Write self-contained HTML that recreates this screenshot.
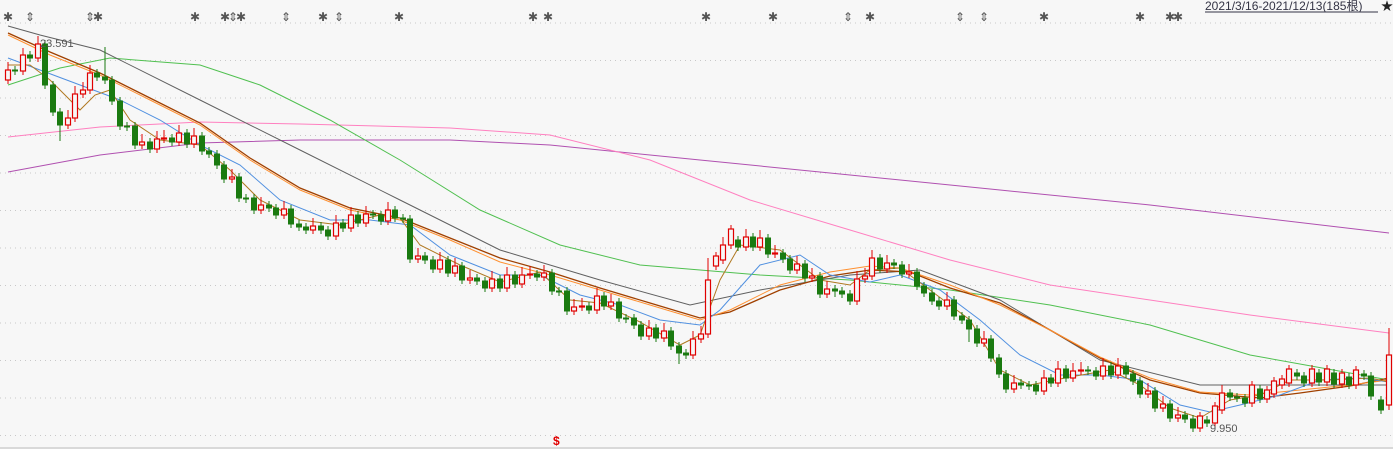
<!DOCTYPE html>
<html><head><meta charset="utf-8"><style>
html,body{margin:0;padding:0;background:#f7f7f7;width:1393px;height:449px;overflow:hidden;font-family:"Liberation Sans","Noto Sans CJK SC",sans-serif}
svg{position:absolute;left:0;top:0}
.R{fill:#f7f7f7;stroke:#e00000;stroke-width:1.2}
.G{fill:#1a7a10;stroke:#1a7a10}
.rw{stroke:#e00000;fill:none}
.gw{stroke:#1a7a10;fill:none}
.st{font-size:12px;fill:#555;text-anchor:middle}
</style></head><body>
<svg width="1393" height="449" xmlns="http://www.w3.org/2000/svg">
<g stroke="#c8c8c8" stroke-dasharray="1,4">
<line x1="0" x2="1393" y1="23" y2="23"/><line x1="0" x2="1393" y1="60.5" y2="60.5"/><line x1="0" x2="1393" y1="98" y2="98"/><line x1="0" x2="1393" y1="135.5" y2="135.5"/><line x1="0" x2="1393" y1="173" y2="173"/><line x1="0" x2="1393" y1="210.5" y2="210.5"/><line x1="0" x2="1393" y1="248" y2="248"/><line x1="0" x2="1393" y1="285.5" y2="285.5"/><line x1="0" x2="1393" y1="323" y2="323"/><line x1="0" x2="1393" y1="360.5" y2="360.5"/><line x1="0" x2="1393" y1="398" y2="398"/><line x1="0" x2="1393" y1="435.5" y2="435.5"/>
</g>
<line x1="0" x2="1393" y1="448" y2="448" stroke="#bbb"/>
<g fill="none">
<polyline stroke="#b050b0" points="8,172 100,155 200,143 300,140 450,140 550,145 700,160 850,175 1000,190 1150,205 1389,233"/>
<polyline stroke="#ff80c0" points="8,137 100,127 200,122 300,124 450,128 550,135 650,160 750,200 850,230 950,260 1050,285 1150,300 1250,315 1389,333"/>
<polyline stroke="#50c050" points="8,85 60,68 110,58 200,65 260,85 330,120 400,160 480,210 560,245 640,265 700,270 760,275 850,280 950,290 1050,305 1150,325 1250,355 1389,380"/>
<polyline stroke="#606060" points="8,26 40,35 100,50 200,100 300,150 400,200 500,250 600,280 690,305 760,290 850,275 920,270 1000,300 1100,360 1200,385 1300,385 1389,385"/>
<polyline stroke="#a04000" stroke-width="1.3" points="8,33 50,52 100,73 150,98 200,123 250,158 300,188 350,208 400,218 450,238 500,258 550,272 600,288 650,303 700,318 730,312 780,290 830,276 870,270 910,272 950,288 1000,303 1050,330 1100,358 1150,380 1200,393 1260,398 1300,393 1350,386 1389,378"/>
<polyline stroke="#ff9030" points="8,35 50,55 100,75 150,100 200,125 250,160 300,190 350,210 400,220 450,240 500,262 550,275 600,290 650,305 700,320 730,310 780,285 830,272 870,266 900,268 950,285 1000,305 1050,330 1100,357 1150,378 1200,392 1250,395 1300,390 1350,385 1389,380"/>
<polyline stroke="#5090e0" points="8,58 40,70 80,85 120,100 160,120 200,145 240,165 280,200 330,220 370,220 410,225 450,255 500,275 540,275 580,295 620,305 660,320 700,325 720,310 760,265 800,255 830,275 870,282 900,275 940,290 980,320 1020,355 1060,375 1100,375 1140,380 1180,405 1210,412 1240,405 1280,395 1320,380 1360,378 1389,382"/>
<polyline stroke="#b07820" points="8,65 30,65 50,80 70,100 80,110 95,95 110,90 130,120 160,140 200,145 230,170 260,200 300,220 340,225 380,215 400,218 420,245 460,265 500,282 540,272 570,300 600,303 640,322 680,345 700,335 720,280 740,245 780,250 820,280 850,285 870,270 900,268 930,290 970,320 1000,370 1030,385 1070,377 1110,370 1140,385 1170,408 1200,418 1230,400 1260,395 1290,380 1330,380 1370,378 1389,382"/>
</g>
<path class="rw" d="M8 62V84M23 48V75M38 36V62M68 110V129M75 86V122M83 82V98M90 65V94M142 134V149M157 131V153M164 130V143M179 125V146M194 128V148M232 169V183M261 197V214M284 201V219M313 218V234M336 215V240M351 207V232M366 206V227M388 202V225M418 248V263M440 252V273M455 258V277M470 270V284M492 271V292M507 267V292M522 267V288M530 266V279M544 265V281M574 299V315M582 298V311M597 288V314M611 294V310M649 320V340M664 323V342M693 331V359M701 326V343M708 258V338M716 252V270M723 237V264M731 225V249M746 229V251M760 230V251M775 245V258M797 256V274M812 268V282M827 281V298M857 271V305M865 268V283M872 250V280M887 255V273M909 264V278M947 292V310M984 331V347M1014 375V393M1044 370V395M1058 361V387M1073 363V382M1081 362V375M1103 358V380M1118 358V379M1148 383V398M1163 396V412M1178 407V422M1200 412V432M1215 402V427M1222 385V414M1252 381V407M1267 386V403M1274 377V398M1282 375V389M1289 365V387M1312 365V387M1327 365V386M1342 369V388M1356 366V389M1389 328V410"/>
<path class="gw" d="M15 66V75M30 51V62M45 40V89M53 81V116M60 108V141M97 69V81M105 47V84M112 76V105M120 97V130M127 122V131M135 122V149M150 138V153M172 134V146M187 129V148M202 132V155M209 147V158M217 150V169M224 161V183M239 173V202M246 194V203M254 194V214M269 201V212M276 204V219M291 205V228M299 220V231M306 223V234M321 222V234M328 226V240M343 219V232M358 211V227M373 210V219M381 211V225M395 206V222M403 214V223M410 215V263M425 252V264M433 256V273M448 256V277M462 262V284M477 274V285M485 277V292M500 275V292M515 271V288M537 270V281M552 269V295M559 287V296M567 287V315M589 302V314M604 292V310M619 298V322M626 314V323M634 314V329M641 321V340M656 324V342M671 327V350M679 342V364M686 349V359M738 236V251M753 233V251M768 234V258M783 249V263M790 255V274M805 260V282M820 272V298M835 285V297M842 287V298M850 290V305M880 254V273M894 259V269M902 261V278M917 268V290M924 282V297M932 289V305M939 297V310M954 296V320M962 312V324M969 316V342M977 325V347M991 335V362M999 354V378M1006 370V393M1021 379V389M1029 381V390M1036 381V395M1051 374V387M1066 365V382M1088 366V375M1096 367V380M1111 362V379M1126 362V378M1133 370V385M1140 377V398M1155 387V412M1170 400V422M1185 411V423M1193 415V432M1207 416V427M1230 389V401M1237 393V402M1245 394V407M1260 385V403M1297 369V380M1304 372V387M1319 369V386M1334 369V388M1349 373V389M1364 370V380M1371 372V400M1381 396V414"/>
<g>
<rect class="R" x="5.5" y="70" width="5" height="10"/><rect class="G" x="12.5" y="70" width="5" height="1"/><rect class="R" x="20.5" y="55" width="5" height="16"/><rect class="G" x="27.5" y="55" width="5" height="3"/><rect class="R" x="35.5" y="44" width="5" height="14"/><rect class="G" x="42.5" y="44" width="5" height="41"/><rect class="G" x="50.5" y="85" width="5" height="27"/><rect class="G" x="57.5" y="112" width="5" height="13"/><rect class="R" x="65.5" y="118" width="5" height="7"/><rect class="R" x="72.5" y="94" width="5" height="24"/><rect class="R" x="80.5" y="90" width="5" height="4"/><rect class="R" x="87.5" y="73" width="5" height="17"/><rect class="G" x="94.5" y="73" width="5" height="4"/><rect class="G" x="102.5" y="77" width="5" height="3"/><rect class="G" x="109.5" y="80" width="5" height="21"/><rect class="G" x="117.5" y="101" width="5" height="25"/><rect class="G" x="124.5" y="126" width="5" height="1"/><rect class="G" x="132.5" y="126" width="5" height="19"/><rect class="R" x="139.5" y="142" width="5" height="3"/><rect class="G" x="147.5" y="142" width="5" height="7"/><rect class="R" x="154.5" y="139" width="5" height="10"/><rect class="R" x="161.5" y="138" width="5" height="1"/><rect class="G" x="169.5" y="138" width="5" height="4"/><rect class="R" x="176.5" y="133" width="5" height="9"/><rect class="G" x="184.5" y="133" width="5" height="11"/><rect class="R" x="191.5" y="136" width="5" height="8"/><rect class="G" x="199.5" y="136" width="5" height="15"/><rect class="G" x="206.5" y="151" width="5" height="3"/><rect class="G" x="214.5" y="154" width="5" height="11"/><rect class="G" x="221.5" y="165" width="5" height="14"/><rect class="R" x="229.5" y="177" width="5" height="2"/><rect class="G" x="236.5" y="177" width="5" height="21"/><rect class="G" x="243.5" y="198" width="5" height="1"/><rect class="G" x="251.5" y="198" width="5" height="12"/><rect class="R" x="258.5" y="205" width="5" height="5"/><rect class="G" x="266.5" y="205" width="5" height="3"/><rect class="G" x="273.5" y="208" width="5" height="7"/><rect class="R" x="281.5" y="209" width="5" height="6"/><rect class="G" x="288.5" y="209" width="5" height="15"/><rect class="G" x="296.5" y="224" width="5" height="3"/><rect class="G" x="303.5" y="227" width="5" height="3"/><rect class="R" x="310.5" y="226" width="5" height="4"/><rect class="G" x="318.5" y="226" width="5" height="4"/><rect class="G" x="325.5" y="230" width="5" height="6"/><rect class="R" x="333.5" y="223" width="5" height="13"/><rect class="G" x="340.5" y="223" width="5" height="5"/><rect class="R" x="348.5" y="215" width="5" height="13"/><rect class="G" x="355.5" y="215" width="5" height="8"/><rect class="R" x="363.5" y="214" width="5" height="9"/><rect class="G" x="370.5" y="214" width="5" height="1"/><rect class="G" x="378.5" y="215" width="5" height="6"/><rect class="R" x="385.5" y="210" width="5" height="11"/><rect class="G" x="392.5" y="210" width="5" height="8"/><rect class="G" x="400.5" y="218" width="5" height="1"/><rect class="G" x="407.5" y="219" width="5" height="40"/><rect class="R" x="415.5" y="256" width="5" height="3"/><rect class="G" x="422.5" y="256" width="5" height="4"/><rect class="G" x="430.5" y="260" width="5" height="9"/><rect class="R" x="437.5" y="260" width="5" height="9"/><rect class="G" x="445.5" y="260" width="5" height="13"/><rect class="R" x="452.5" y="266" width="5" height="7"/><rect class="G" x="459.5" y="266" width="5" height="14"/><rect class="R" x="467.5" y="278" width="5" height="2"/><rect class="G" x="474.5" y="278" width="5" height="3"/><rect class="G" x="482.5" y="281" width="5" height="7"/><rect class="R" x="489.5" y="279" width="5" height="9"/><rect class="G" x="497.5" y="279" width="5" height="9"/><rect class="R" x="504.5" y="275" width="5" height="13"/><rect class="G" x="512.5" y="275" width="5" height="9"/><rect class="R" x="519.5" y="275" width="5" height="9"/><rect class="R" x="527.5" y="274" width="5" height="1"/><rect class="G" x="534.5" y="274" width="5" height="3"/><rect class="R" x="541.5" y="273" width="5" height="4"/><rect class="G" x="549.5" y="273" width="5" height="18"/><rect class="G" x="556.5" y="291" width="5" height="1"/><rect class="G" x="564.5" y="291" width="5" height="20"/><rect class="R" x="571.5" y="307" width="5" height="4"/><rect class="R" x="579.5" y="306" width="5" height="1"/><rect class="G" x="586.5" y="306" width="5" height="4"/><rect class="R" x="594.5" y="296" width="5" height="14"/><rect class="G" x="601.5" y="296" width="5" height="10"/><rect class="R" x="608.5" y="302" width="5" height="4"/><rect class="G" x="616.5" y="302" width="5" height="16"/><rect class="G" x="623.5" y="318" width="5" height="1"/><rect class="G" x="631.5" y="318" width="5" height="7"/><rect class="G" x="638.5" y="325" width="5" height="11"/><rect class="R" x="646.5" y="328" width="5" height="8"/><rect class="G" x="653.5" y="328" width="5" height="10"/><rect class="R" x="661.5" y="331" width="5" height="7"/><rect class="G" x="668.5" y="331" width="5" height="15"/><rect class="G" x="676.5" y="346" width="5" height="7"/><rect class="G" x="683.5" y="353" width="5" height="2"/><rect class="R" x="690.5" y="339" width="5" height="16"/><rect class="R" x="698.5" y="334" width="5" height="5"/><rect class="R" x="705.5" y="280" width="5" height="54"/><rect class="R" x="713.5" y="256" width="5" height="10"/><rect class="R" x="720.5" y="245" width="5" height="15"/><rect class="R" x="728.5" y="229" width="5" height="16"/><rect class="G" x="735.5" y="240" width="5" height="7"/><rect class="R" x="743.5" y="237" width="5" height="10"/><rect class="G" x="750.5" y="237" width="5" height="10"/><rect class="R" x="757.5" y="238" width="5" height="9"/><rect class="G" x="765.5" y="238" width="5" height="16"/><rect class="R" x="772.5" y="253" width="5" height="1"/><rect class="G" x="780.5" y="253" width="5" height="6"/><rect class="G" x="787.5" y="259" width="5" height="11"/><rect class="R" x="794.5" y="264" width="5" height="6"/><rect class="G" x="802.5" y="264" width="5" height="14"/><rect class="R" x="809.5" y="276" width="5" height="2"/><rect class="G" x="817.5" y="276" width="5" height="18"/><rect class="R" x="824.5" y="289" width="5" height="5"/><rect class="G" x="832.5" y="289" width="5" height="2"/><rect class="G" x="839.5" y="291" width="5" height="3"/><rect class="G" x="847.5" y="294" width="5" height="7"/><rect class="R" x="854.5" y="279" width="5" height="22"/><rect class="R" x="862.5" y="276" width="5" height="3"/><rect class="R" x="869.5" y="258" width="5" height="18"/><rect class="G" x="877.5" y="258" width="5" height="11"/><rect class="R" x="884.5" y="263" width="5" height="6"/><rect class="G" x="891.5" y="263" width="5" height="2"/><rect class="G" x="899.5" y="265" width="5" height="9"/><rect class="R" x="906.5" y="272" width="5" height="2"/><rect class="G" x="914.5" y="272" width="5" height="14"/><rect class="G" x="921.5" y="286" width="5" height="7"/><rect class="G" x="929.5" y="293" width="5" height="8"/><rect class="G" x="936.5" y="301" width="5" height="5"/><rect class="R" x="944.5" y="300" width="5" height="6"/><rect class="G" x="951.5" y="300" width="5" height="16"/><rect class="G" x="959.5" y="316" width="5" height="4"/><rect class="G" x="966.5" y="320" width="5" height="9"/><rect class="G" x="974.5" y="329" width="5" height="14"/><rect class="R" x="981.5" y="339" width="5" height="4"/><rect class="G" x="988.5" y="339" width="5" height="19"/><rect class="G" x="996.5" y="358" width="5" height="16"/><rect class="G" x="1003.5" y="374" width="5" height="15"/><rect class="R" x="1011.5" y="383" width="5" height="6"/><rect class="G" x="1018.5" y="383" width="5" height="2"/><rect class="G" x="1026.5" y="385" width="5" height="1"/><rect class="G" x="1033.5" y="385" width="5" height="6"/><rect class="R" x="1041.5" y="378" width="5" height="13"/><rect class="G" x="1048.5" y="378" width="5" height="5"/><rect class="R" x="1055.5" y="369" width="5" height="14"/><rect class="G" x="1063.5" y="369" width="5" height="9"/><rect class="R" x="1070.5" y="371" width="5" height="7"/><rect class="R" x="1078.5" y="370" width="5" height="1"/><rect class="G" x="1085.5" y="370" width="5" height="1"/><rect class="G" x="1093.5" y="371" width="5" height="5"/><rect class="R" x="1100.5" y="366" width="5" height="10"/><rect class="G" x="1108.5" y="366" width="5" height="9"/><rect class="R" x="1115.5" y="366" width="5" height="9"/><rect class="G" x="1123.5" y="366" width="5" height="8"/><rect class="G" x="1130.5" y="374" width="5" height="7"/><rect class="G" x="1137.5" y="381" width="5" height="13"/><rect class="R" x="1145.5" y="391" width="5" height="3"/><rect class="G" x="1152.5" y="391" width="5" height="17"/><rect class="R" x="1160.5" y="404" width="5" height="4"/><rect class="G" x="1167.5" y="404" width="5" height="14"/><rect class="R" x="1175.5" y="415" width="5" height="3"/><rect class="G" x="1182.5" y="415" width="5" height="4"/><rect class="G" x="1190.5" y="419" width="5" height="9"/><rect class="R" x="1197.5" y="416" width="5" height="12"/><rect class="G" x="1204.5" y="420" width="5" height="3"/><rect class="R" x="1212.5" y="406" width="5" height="17"/><rect class="R" x="1219.5" y="393" width="5" height="17"/><rect class="G" x="1227.5" y="393" width="5" height="4"/><rect class="G" x="1234.5" y="397" width="5" height="1"/><rect class="G" x="1242.5" y="398" width="5" height="5"/><rect class="R" x="1249.5" y="385" width="5" height="18"/><rect class="G" x="1257.5" y="389" width="5" height="10"/><rect class="R" x="1264.5" y="390" width="5" height="9"/><rect class="R" x="1271.5" y="381" width="5" height="13"/><rect class="R" x="1279.5" y="379" width="5" height="6"/><rect class="R" x="1286.5" y="369" width="5" height="14"/><rect class="G" x="1294.5" y="373" width="5" height="3"/><rect class="G" x="1301.5" y="376" width="5" height="7"/><rect class="R" x="1309.5" y="369" width="5" height="14"/><rect class="G" x="1316.5" y="373" width="5" height="9"/><rect class="R" x="1324.5" y="369" width="5" height="13"/><rect class="G" x="1331.5" y="373" width="5" height="11"/><rect class="R" x="1339.5" y="373" width="5" height="11"/><rect class="G" x="1346.5" y="377" width="5" height="8"/><rect class="R" x="1353.5" y="370" width="5" height="15"/><rect class="G" x="1361.5" y="374" width="5" height="2"/><rect class="G" x="1368.5" y="376" width="5" height="20"/><rect class="G" x="1378.5" y="400" width="5" height="10"/><rect class="R" x="1386.5" y="355" width="5" height="50"/>
</g>
<text x="40" y="47" font-size="11" fill="#555">23.591</text>
<text x="1210" y="432" font-size="11" fill="#555">9.950</text>
<text class="st" x="8" y="21">✱</text><text class="st" x="30" y="21">⇕</text><text class="st" x="90" y="21">⇕</text><text class="st" x="98" y="21">✱</text><text class="st" x="195" y="21">✱</text><text class="st" x="225" y="21">✱</text><text class="st" x="233" y="21">⇕</text><text class="st" x="241" y="21">✱</text><text class="st" x="286" y="21">⇕</text><text class="st" x="323" y="21">✱</text><text class="st" x="339" y="21">⇕</text><text class="st" x="399" y="21">✱</text><text class="st" x="533" y="21">✱</text><text class="st" x="548" y="21">✱</text><text class="st" x="706" y="21">✱</text><text class="st" x="773" y="21">✱</text><text class="st" x="848" y="21">⇕</text><text class="st" x="870" y="21">✱</text><text class="st" x="960" y="21">⇕</text><text class="st" x="984" y="21">⇕</text><text class="st" x="1044" y="21">✱</text><text class="st" x="1140" y="21">✱</text><text class="st" x="1170" y="21">✱</text><text class="st" x="1178" y="21">✱</text>
<text x="1205" y="10" font-size="12" fill="#334">2021/3/16-2021/12/13(185根)</text>
<line x1="1205" x2="1378" y1="12" y2="12" stroke="#334"/>
<text x="1381" y="10" font-size="12" fill="#222">★</text>
<text x="553" y="445" font-size="12" font-weight="bold" fill="#e00000">$</text>
</svg>
</body></html>
